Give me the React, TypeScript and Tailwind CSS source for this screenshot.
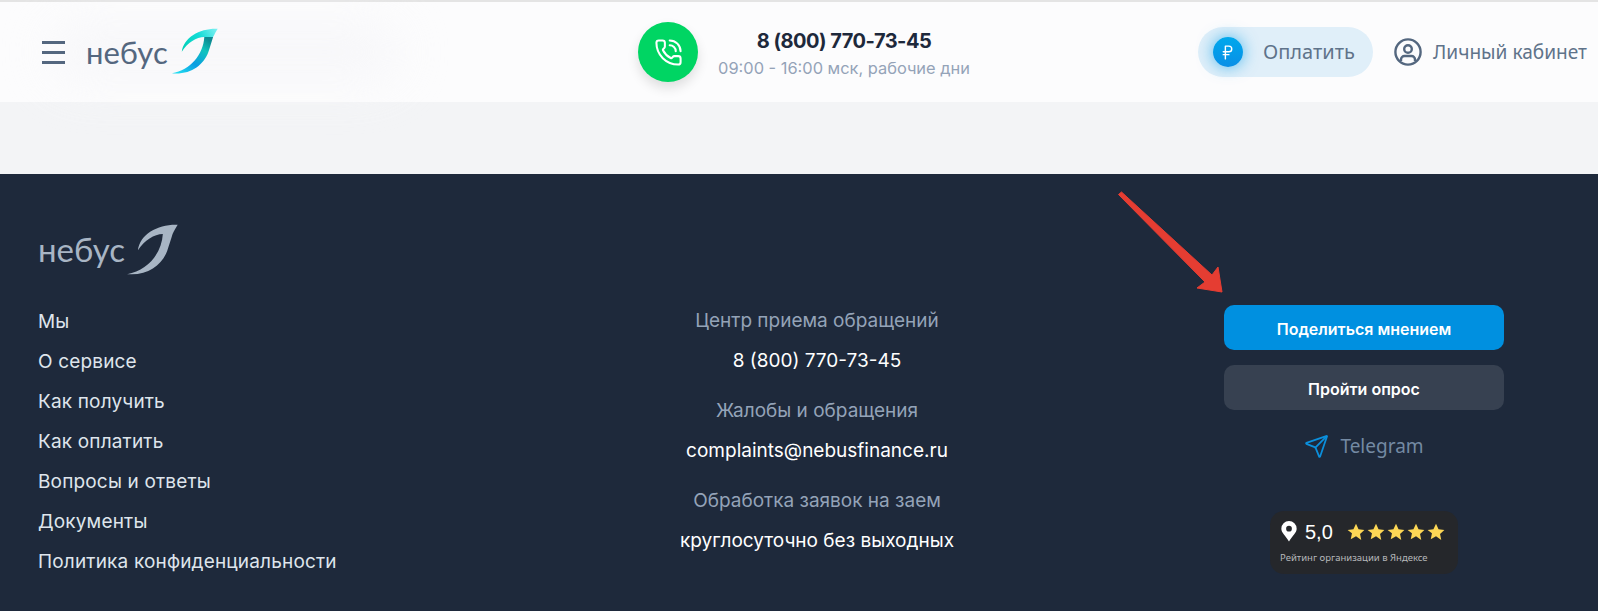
import { PhoneCall, RussianRuble, Send } from "lucide-react";

const links = ["Мы", "О сервисе", "Как получить", "Как оплатить", "Вопросы и ответы", "Документы", "Политика конфиденциальности"];

const contacts = [
  { label: "Центр приема обращений", value: "8 (800) 770-73-45" },
  { label: "Жалобы и обращения", value: "complaints@nebusfinance.ru" },
  { label: "Обработка заявок на заем", value: "круглосуточно без выходных" },
];

function Leaf({ id, mono, className }: { id: string; mono?: string; className: string }) {
  return (
    <svg viewBox="0 0 48 48" className={className}>
      <defs>
        <linearGradient id={`${id}-top`} x1="11" y1="24" x2="47" y2="1" gradientUnits="userSpaceOnUse">
          <stop offset="0" stopColor="#00cdb4" />
          <stop offset="0.55" stopColor="#13dcd6" />
          <stop offset="1" stopColor="#7ff0f2" />
        </linearGradient>
        <linearGradient id={`${id}-low`} x1="34" y1="9" x2="8" y2="47" gradientUnits="userSpaceOnUse">
          <stop offset="0" stopColor="#0d8b92" />
          <stop offset="0.25" stopColor="#10c4bd" />
          <stop offset="0.62" stopColor="#0a9de2" />
          <stop offset="1" stopColor="#22dcf0" />
        </linearGradient>
      </defs>
      <path
        d="M47.7 .7C30 0 13 9 11 24.3C17 15 26 9.5 34 9.3L43 9.3C44.5 6 46 3.5 47.7 .7Z"
        fill={mono ?? `url(#${id}-top)`}
      />
      <path
        d="M34 9.3C33 27 20 43 1 46.3C20 48 33 38 38 25C40 19 41.5 14 43 9.3Z"
        fill={mono ?? `url(#${id}-low)`}
      />
    </svg>
  );
}

function Star() {
  return (
    <svg viewBox="0 0 24 24" className="w-[18px] h-[18px] fill-[#fcd655]">
      <path d="M12 1l3.4 7.3 7.8 1-5.8 5.4 1.6 7.9L12 17.7l-7 3.9 1.6-7.9L.8 9.3l7.8-1z" />
    </svg>
  );
}

function Header() {
  return (
    <header className="relative h-[102px] bg-[#fcfcfd] border-t-2 border-[#e4e4e4] flex items-center justify-between">
      <div className="absolute left-[50px] top-[20px] w-[350px] h-[60px] rounded-full bg-[#f5f5f8] blur-xl opacity-70" />
      <div className="relative flex items-center pl-[42px]">
        <div className="w-[23px] flex flex-col gap-[7px]">
          <span className="h-[3px] bg-[#54677f]" />
          <span className="h-[3px] bg-[#54677f]" />
          <span className="h-[3px] bg-[#54677f]" />
        </div>
        <span className="ml-[21px] text-[31px] leading-none text-[#54677f] font-['Lato',sans-serif]">небус</span>
        <Leaf id="head" className="ml-[3px] -mt-[1px] w-[47px] h-[47px]" />
      </div>
      <div className="absolute left-[638px] top-[20px] flex items-center">
        <div className="w-[60px] h-[60px] rounded-full bg-[#00d563] shadow-[0_6px_12px_rgba(0,0,0,0.12)] flex items-center justify-center">
          <PhoneCall size={29} strokeWidth={1.7} className="text-white" />
        </div>
        <div className="ml-[20px] w-[252px] text-center pt-[3px]">
          <div className="text-[20px] leading-[24px] font-bold tracking-[-0.5px] text-[#1e293b] font-['Inter',sans-serif]">8 (800) 770-73-45</div>
          <div className="mt-[4px] text-[16.4px] leading-[22px] text-[#94a3b8] font-['Inter',sans-serif]">09:00 - 16:00 мск, рабочие дни</div>
        </div>
      </div>
      <div className="relative flex items-center pr-[11px]">
        <div className="w-[175px] h-[50px] rounded-full bg-[#e0eff9] flex items-center pl-[15px]">
          <div className="w-[30px] h-[30px] rounded-full bg-gradient-to-b from-[#00a8ec] to-[#0a8fe6] shadow-[0_0_16px_rgba(10,159,232,0.7)] flex items-center justify-center">
            <RussianRuble size={17} strokeWidth={2} className="text-white" />
          </div>
          <span className="ml-[20px] text-[20px] text-[#5f738a] font-['Noto_Sans',sans-serif]">Оплатить</span>
        </div>
        <svg viewBox="0 0 28 28" className="ml-[21px] w-[28px] h-[28px] fill-none stroke-[#54677f] stroke-[2.4]">
          <circle cx="14" cy="14" r="12.6" />
          <circle cx="14" cy="11" r="3.8" />
          <path d="M7 23v-1.5a3.5 3.5 0 0 1 3.5-3.5h7a3.5 3.5 0 0 1 3.5 3.5V23" />
        </svg>
        <span className="ml-[11px] text-[19.1px] text-[#5f738a] font-['Noto_Sans',sans-serif]">Личный кабинет</span>
      </div>
    </header>
  );
}

function Footer() {
  return (
    <footer className="relative h-[437px] bg-[#1e293b] pl-[38px] pt-[50px] flex font-['Inter',sans-serif]">
      <svg viewBox="0 0 1598 437" className="absolute inset-0 w-full h-full pointer-events-none">
        <path d="M1121.5 18L1212 101L1218 93L1222 118L1197 114L1205 108L1118.5 20.5Z" fill="#e53d32" stroke="#e53d32" strokeWidth="1" strokeLinejoin="round" />
      </svg>
      <div className="w-[560px]">
        <div className="flex items-center h-[51px]">
          <span className="text-[33px] leading-none text-[#a8b5c4] font-['Lato',sans-serif]">небус</span>
          <Leaf id="foot" mono="#a8b5c4" className="ml-[1px] w-[52px] h-[52px]" />
        </div>
        <ul className="mt-[32px] flex flex-col gap-[10px]">
          {links.map((link) => (
            <li key={link} className="text-[19px] leading-[30px] tracking-[0.17px] text-[#dfe5ec]">{link}</li>
          ))}
        </ul>
      </div>
      <div className="w-[438px] pt-[82px] flex flex-col items-center text-center">
        {contacts.map((c) => (
          <div key={c.label} className="mb-[20px]">
            <div className="text-[19px] leading-[30px] text-[#94a3b8]">{c.label}</div>
            <div className="mt-[10px] text-[19px] leading-[30px] text-white">{c.value}</div>
          </div>
        ))}
      </div>
      <div className="ml-[188px] w-[280px] pt-[81px] flex flex-col items-center">
        <button className="w-full h-[45px] pt-[2px] rounded-[10px] bg-[#0090e0] text-white text-[16px] font-semibold">Поделиться мнением</button>
        <button className="mt-[15px] w-full h-[45px] pt-[2px] rounded-[10px] bg-[#374151] text-white text-[16px] font-semibold">Пройти опрос</button>
        <div className="mt-[22px] flex items-center gap-[11px]">
          <Send size={25} strokeWidth={1.7} className="text-[#0b8fdc]" />
          <span className="text-[19px] text-[#748aa3] font-['Noto_Sans',sans-serif]">Telegram</span>
        </div>
        <div className="mt-[50px] w-[188px] h-[63px] rounded-[14px] bg-[#25272b] pl-[10px] pt-[10px] font-['Noto_Sans',sans-serif]">
          <div className="flex items-center h-[22px]">
            <svg viewBox="0 0 18 24" className="w-[18px] h-[23px]">
              <path fillRule="evenodd" fill="#fff" d="M9 1a8 8 0 0 1 8 8c0 4.4-4.6 7.2-8 13.5C5.6 16.2 1 13.4 1 9a8 8 0 0 1 8-8zm0 5a3 3 0 1 0 0 6 3 3 0 0 0 0-6z" />
            </svg>
            <span className="ml-[7px] text-[20px] leading-none text-white font-['Liberation_Sans',sans-serif]">5,0</span>
            <div className="ml-[14px] flex gap-[2px]">
              <Star />
              <Star />
              <Star />
              <Star />
              <Star />
            </div>
          </div>
          <div className="mt-[8px] text-[9.5px] leading-[14px] text-[#b5b7ba]">Рейтинг организации в Яндексе</div>
        </div>
      </div>
    </footer>
  );
}

export default function App() {
  return (
    <div className="h-[611px] overflow-hidden bg-[#f3f4f6]">
      <Header />
      <div className="h-[72px]" />
      <Footer />
    </div>
  );
}
